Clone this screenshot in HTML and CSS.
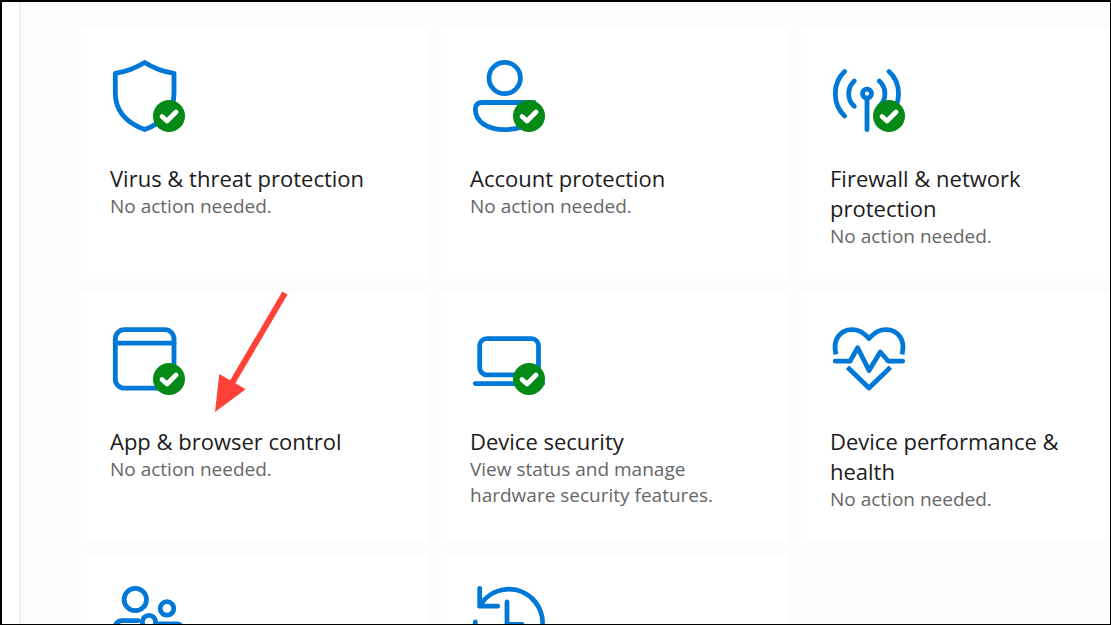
FILE: index.html
```
<!DOCTYPE html>
<html lang="en">
<head>
<meta charset="utf-8">
<title>Security at a glance</title>
<link rel="stylesheet" href="styles.css">
</head>
<body>
<div class="window">
  <aside class="rail"></aside>
  <main class="content">
    <div class="grid">
      <a class="card" href="#virus">
        <svg class="icon" viewBox="0 0 72 72" aria-hidden="true">
          <path d="M31.7 2.5Q18 11 2.3 13.3V33C2.3 52 14 63 31.7 69.6C49 63 61 52 61 33V13.3Q45 11 31.7 2.5Z"/>
          <circle class="badge" cx="56" cy="56" r="16"/><path class="tick" d="M49 56.5L54 61L63 52"/>
        </svg>
        <h2 class="title">Virus &amp; threat protection</h2>
        <p class="status">No action needed.</p>
      </a>
      <a class="card" href="#account">
        <svg class="icon" viewBox="0 0 72 72" aria-hidden="true">
          <circle cx="31.7" cy="18" r="15.7"/>
          <path d="M61 42.5H9Q2.3 42.5 2.3 49C2.3 62 15 69.6 31.7 69.6C42 69.6 54 67 61 59Z"/>
          <circle class="badge" cx="56" cy="56" r="16"/><path class="tick" d="M49 56.5L54 61L63 52"/>
        </svg>
        <h2 class="title">Account protection</h2>
        <p class="status">No action needed.</p>
      </a>
      <a class="card" href="#firewall">
        <svg class="icon" viewBox="0 0 72 72" aria-hidden="true">
          <circle cx="34" cy="33.7" r="4.5"/>
          <path d="M34 38V69.7M11.7 11.5Q2.3 20 2.3 33.7T11.7 56M21.3 21Q15.7 26 15.7 33.7T21.3 46.3M46.3 21Q51.9 26 51.9 33.7T46.3 46.3M56 11.5Q65.5 20 65.5 33.7T56 56"/>
          <circle class="badge" cx="56" cy="56" r="16"/><path class="tick" d="M49 56.5L54 61L63 52"/>
        </svg>
        <h2 class="title">Firewall &amp; network protection</h2>
        <p class="status">No action needed.</p>
      </a>
      <a class="card" href="#app-browser">
        <svg class="icon" viewBox="0 0 72 72" aria-hidden="true">
          <rect x="2.3" y="6.7" width="58.7" height="58.5" rx="9"/>
          <path d="M2.3 20.2H61"/>
          <circle class="badge" cx="56" cy="56" r="16"/><path class="tick" d="M49 56.5L54 61L63 52"/>
        </svg>
        <h2 class="title">App &amp; browser control</h2>
        <p class="status">No action needed.</p>
      </a>
      <a class="card" href="#device-security">
        <svg class="icon" viewBox="0 0 72 72" aria-hidden="true">
          <rect x="6.7" y="15.6" width="58.8" height="36.2" rx="7"/>
          <path d="M2.3 60.6H69.7"/>
          <circle class="badge" cx="56" cy="56" r="16"/><path class="tick" d="M49 56.5L54 61L63 52"/>
        </svg>
        <h2 class="title">Device security</h2>
        <p class="status">View status and manage hardware security features.</p>
      </a>
      <a class="card" href="#performance">
        <svg class="icon" viewBox="0 0 72 72" aria-hidden="true">
          <path class="butt" d="M3 31.3C-1 16 8 6.7 18.8 6.7C25 6.7 29 8.3 36 15.5C43 8.3 47 6.7 53.2 6.7C64 6.7 73 16 69 31.3M14.5 44.3L36 65L57.5 44.3"/>
          <path d="M2.3 38.2H17L24.7 24.8L36 47.5L47.3 29L55.3 38.2H69.7"/>
        </svg>
        <h2 class="title">Device performance &amp; health</h2>
        <p class="status">No action needed.</p>
      </a>
      <a class="card" href="#family" aria-label="Family options">
        <svg class="icon" viewBox="0 0 72 72" aria-hidden="true">
          <circle cx="22.3" cy="13.5" r="11.2"/>
          <circle cx="54" cy="22.4" r="6.8"/>
          <circle cx="36" cy="36" r="6.7"/>
          <path d="M2.3 46V42Q2.3 34.6 10 34.6H25M46 38H63Q69.7 38 69.7 45"/>
        </svg>
      </a>
      <a class="card" href="#history" aria-label="Protection history">
        <svg class="icon" viewBox="0 0 72 72" aria-hidden="true">
          <path d="M6.7 2.3V20.2H24.7M6.7 20.2A33.6 33.6 0 1 1 2.3 36M34 16V38.3H49"/>
        </svg>
      </a>
    </div>
  </main>
  <svg class="pointer" viewBox="0 0 72 120" aria-hidden="true">
    <path class="shaft" d="M71 1L18 91"/>
    <path class="head" d="M5.3 82L31.7 97.3L1 120Z"/>
  </svg>
</div>
</body>
</html>
```
FILE: styles.css
```
* { box-sizing: border-box; }

body {
  margin: 0;
  font-family: "Open Sans", "Noto Sans", sans-serif;
}

.window {
  position: relative;
  display: flex;
  height: 100vh;
  overflow: hidden;
  border: solid #000;
  border-width: 2px 1px 1px 2px;
  background: #fff;
}

.rail {
  flex: 0 0 19px;
  border-right: 2px solid #efefef;
}

.content {
  flex: 1;
  min-width: 0;
  overflow: hidden;
  padding: 26px 0 0 60px;
  background: #fcfcfc;
}

.grid {
  display: grid;
  grid-template-columns: repeat(3, 348px);
  grid-auto-rows: minmax(251px, auto);
  gap: 12px;
}

.card {
  padding: 32px 56px 28px 29px;
  background: #fff;
  color: #1b1b1b;
  text-decoration: none;
}

.icon {
  display: block;
  width: 72px;
  height: 72px;
  margin: 0 0 31px 3px;
  fill: none;
  stroke: #0078d7;
  stroke-width: 4.8;
  stroke-linecap: round;
  stroke-linejoin: round;
  overflow: visible;
}

.icon .butt { stroke-linecap: butt; }
.icon .badge { fill: #048a17; stroke: none; }
.icon .tick { stroke: #fff; stroke-width: 4.8; }

.title {
  margin: 0;
  font-size: 22px;
  line-height: 30px;
  font-weight: 400;
}

.status {
  margin: 0;
  color: #666;
  font-size: 19px;
  line-height: 26px;
}

.pointer {
  position: absolute;
  left: 212px;
  top: 290px;
  width: 72px;
  height: 120px;
  overflow: visible;
}

.shaft { fill: none; stroke: #ff4238; stroke-width: 6; }
.head { fill: #ff4238; }
```
